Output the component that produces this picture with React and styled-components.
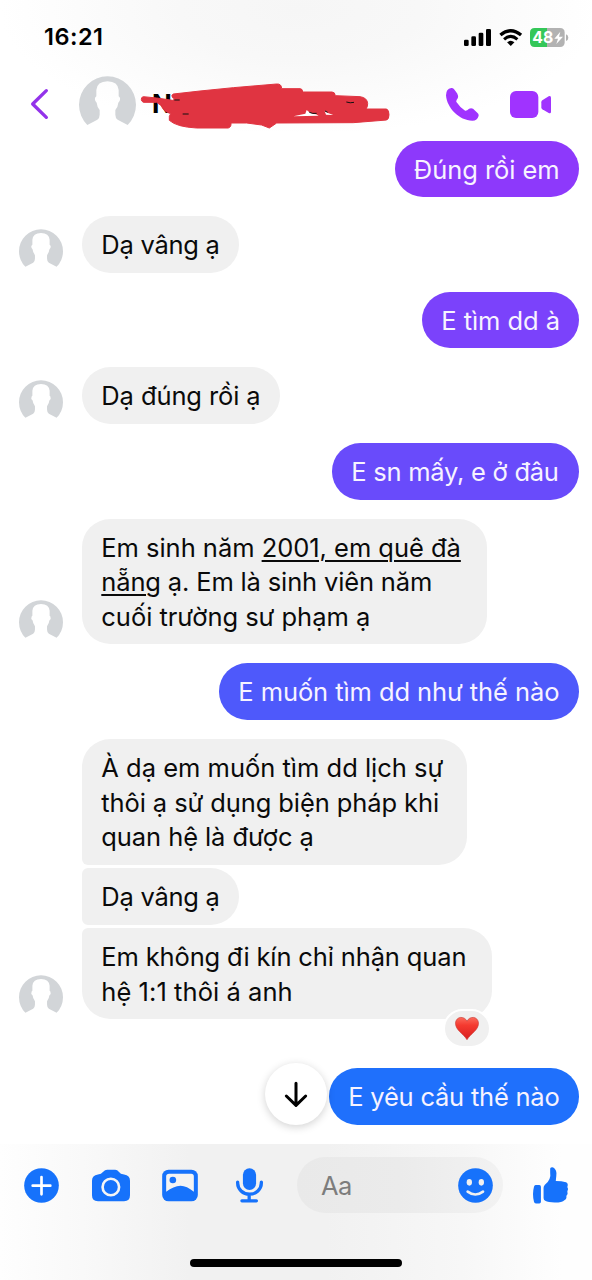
import React from "react";
import styled, { createGlobalStyle } from "styled-components";

const GlobalStyle = createGlobalStyle`
  * { box-sizing: border-box; }
  body {
    margin: 0;
    background: #fff;
    font-family: Inter, "Liberation Sans", sans-serif;
  }
  svg { display: block; overflow: visible; }
`;

const Screen = styled.div`
  width: 592px;
  height: 1280px;
  display: flex;
  flex-direction: column;
  overflow: hidden;
  background: #fff;
`;

const Header = styled.header`
  height: 132px;
  flex: none;
  background: radial-gradient(ellipse 300px 125px at 300px 10px, #f6f6f6 0%, #f8f8f8 40%, #fff 100%);
`;

const StatusBar = styled.div`
  height: 74px;
  display: flex;
  align-items: center;
  padding: 0 23px 0 44px;
`;

const Clock = styled.div`
  flex: 1;
  font-size: 23.5px;
  font-weight: 600;
  letter-spacing: 0.5px;
  line-height: 28px;
`;

const StatusIcons = styled.div`
  display: flex;
  align-items: center;
  gap: 8px;
`;

const NavBar = styled.div`
  height: 58px;
  display: flex;
  align-items: center;
  padding: 2px 41px 0 31px;
`;

const HeaderAvatar = styled.div`
  margin-left: 31px;
`;

const Name = styled.div`
  position: relative;
  flex: 1;
  margin-left: 16px;
  font-size: 26px;
  font-weight: 700;
  line-height: 32px;
`;

const Scribble = styled.svg`
  position: absolute;
  left: -11px;
  top: -5px;
`;

const Calls = styled.div`
  display: flex;
  align-items: center;
  gap: 31px;
`;

const Chat = styled.main`
  position: relative;
  height: 1012px;
  flex: none;
  padding: 8.6px 13px 0 19px;
  display: flex;
  flex-direction: column;
  gap: 19px;
`;

const Sent = styled.div`
  align-self: flex-end;
  width: ${(p) => p.$width}px;
  height: 56.6px;
  padding: 12px 19.3px 10px;
  border-radius: 28.3px;
  background: ${(p) => p.$color};
  color: #f7f3ff;
  font-size: 25.5px;
  line-height: 34.6px;
  white-space: nowrap;
  margin-top: ${(p) => p.$top || 0}px;
`;

const Received = styled.div`
  display: flex;
  align-items: flex-end;
  gap: 19px;
`;

const SmallAvatar = styled.div`
  width: 44px;
  height: 44px;
`;

const Stack = styled.div`
  display: flex;
  flex-direction: column;
  gap: 3.4px;
`;

const Bubble = styled.div`
  position: relative;
  width: ${(p) => p.$width}px;
  padding: 12px 19.3px 10px;
  border-radius: ${(p) => p.$radius || "28.3px"};
  background: #f0f0f0;
  color: #0a0a0a;
  font-size: 25.5px;
  line-height: 34.6px;
  white-space: nowrap;
`;

const Line = styled.span`
  display: table;
  height: 34.6px;
  letter-spacing: ${(p) => p.$track || 0}px;
`;

const Underlined = styled.span`
  text-decoration: underline;
  text-decoration-thickness: 1.5px;
  text-underline-offset: 3px;
`;

const Reaction = styled.div`
  position: absolute;
  right: 1px;
  bottom: -29px;
  width: 48px;
  height: 39px;
  border: 2px solid #fff;
  border-radius: 20px;
  background: #f0f0f0;
  display: flex;
  align-items: center;
  justify-content: center;
`;

const ScrollDown = styled.button`
  position: absolute;
  left: 265px;
  top: 931px;
  width: 62px;
  height: 62px;
  padding: 0;
  border: 0;
  border-radius: 50%;
  background: #fff;
  box-shadow: 0 2px 8px rgba(0, 0, 0, 0.18);
  display: flex;
  align-items: center;
  justify-content: center;
`;

const Footer = styled.footer`
  flex: 1;
  display: flex;
  flex-direction: column;
  justify-content: space-between;
  align-items: center;
  padding: 13px 0;
  background: linear-gradient(90deg, #fefefe 0%, #f9f9f9 14%, #f1f1f1 32%, #f1f1f1 55%, #f7f7f7 78%, #fefefe 95%);
`;

const Toolbar = styled.div`
  width: 100%;
  display: grid;
  grid-template-columns: 67.5px 70.5px 74px 61px 206px 1fr;
  align-items: center;
  padding-left: 24px;
`;

const Input = styled.div`
  height: 56px;
  border-radius: 28px;
  padding: 0 10px 0 24px;
  display: flex;
  align-items: center;
  justify-content: space-between;
  background: linear-gradient(90deg, #e9e9e9, #ebebeb 50%, #f2f2f2);
  color: #7d7d7d;
  font-size: 25.5px;
  letter-spacing: -0.5px;
`;

const LikeButton = styled.div`
  margin-left: 30px;
`;

const HomeIndicator = styled.div`
  width: 212px;
  height: 8px;
  border-radius: 4px;
  background: #000;
`;

const BLUE = "#1672fb";
const PURPLE = "#a033ff";

function Avatar({ size }) {
  return (
    <svg width={size} height={size} viewBox="0 0 171 171">
      <path
        fill="#d2d5d8"
        d="M25 147A85.5 85.5 0 1 1 146 147L116 131Q109 126 109 116V102Q117 92 118 80Q126 72 122 64L119 61V42Q117 17 85.500 16Q54 17 52 42V61L49 64Q45 72 53 80Q54 92 62 102V116Q62 126 55 131Z"
      />
    </svg>
  );
}

function StatusGlyphs() {
  return (
    <StatusIcons>
      <svg width="27" height="17" viewBox="0 0 81 51">
        <rect x="0" y="32" width="14" height="19" rx="4" />
        <rect x="22" y="22" width="14" height="29" rx="4" />
        <rect x="44" y="11" width="14" height="40" rx="4" />
        <rect x="66" y="0" width="15" height="51" rx="4" />
      </svg>
      <svg width="23.500" height="17" viewBox="0 0 70 51">
        <path d="M4 18Q35-8 66 18" fill="none" stroke="#000" strokeWidth="10" />
        <path d="M15 31Q35 13 55 31" fill="none" stroke="#000" strokeWidth="9" />
        <path d="M24 40Q35 31 46 40L35 51Z" />
      </svg>
      <svg width="39" height="19" viewBox="0 0 117 57">
        <path d="M14 0H51V57H14Q0 57 0 43V14Q0 0 14 0Z" fill="#34c759" />
        <path d="M51 0H90Q104 0 104 14V43Q104 57 90 57H51Z" fill="#b2b2b2" />
        <path d="M108 19Q115 22 115 29T108 39Z" fill="#b2b2b2" />
        <text x="7" y="46" fontSize="49" fontWeight="700" fill="#fff" textLength="63" lengthAdjust="spacingAndGlyphs">48</text>
        <path d="M91 11L73 32H84L79 48L99 26H87Z" fill="#fff" />
      </svg>
    </StatusIcons>
  );
}

function RedScribble() {
  return (
    <Scribble width="250" height="46" viewBox="423 250 750 138">
      <path
        fill="#e03441"
        stroke="#e03441"
        strokeWidth="3"
        strokeLinejoin="round"
        d="M520 283L600 274L700 264L830 253Q845 252 845 267H900Q908 267 908 277H996Q1005 277 1006 288L1080 291Q1102 294 1103 312Q1103 322 1098 328H1160Q1167 332 1167 345Q1167 358 1160 361L1060 369L830 370L808 385L785 376L740 370H693Q694 384 684 385H590Q530 382 508 362V350L512 342Q490 335 484 318L470 308H430Q424 305 424 299Q424 292 430 291L470 295L518 302Q528 298 518 294Q512 286 520 283Z"
      />
      <path d="M920 331Q932 343 948 344L956 348L880 350L916 342ZM974 334Q984 342 1000 346L978 345Z" fill="#fff" />
      <path d="M928 338Q938 343 950 341M975 334L983 338M1039 307Q1051 311 1062 308M548 343H566M523 301H539" fill="none" stroke="#111" strokeWidth="3" />
    </Scribble>
  );
}

function Heart() {
  return (
    <svg width="24" height="23" viewBox="0 0 72 70">
      <defs>
        <linearGradient id="heart" x1="0" y1="0" x2="0" y2="1">
          <stop offset="0" stopColor="#fb6a5b" />
          <stop offset="0.35" stopColor="#f53a30" />
          <stop offset="1" stopColor="#d81e1e" />
        </linearGradient>
      </defs>
      <path
        d="M36 13C29-4 2-3 1 19C1 40 25 51 36 69C47 51 71 40 71 19C70-3 43-4 36 13Z"
        fill="url(#heart)"
        stroke="#c93a34"
        strokeWidth="2"
      />
    </svg>
  );
}

function App() {
  return (
    <>
      <GlobalStyle />
      <Screen>
        <Header>
          <StatusBar>
            <Clock>16:21</Clock>
            <StatusGlyphs />
          </StatusBar>
          <NavBar>
            <svg width="17" height="30" viewBox="0 0 51 90">
              <path d="M46 5L5 45L46 85" fill="none" stroke="#9333ea" strokeWidth="10" strokeLinecap="round" strokeLinejoin="round" />
            </svg>
            <HeaderAvatar>
              <Avatar size={57} />
            </HeaderAvatar>
            <Name>
              N
              <RedScribble />
            </Name>
            <Calls>
              <svg width="33" height="33" viewBox="450 263 100 100" fill={PURPLE}>
                <path d="M466 263Q450 266 450 285C452 322 490 362 530 362Q545 362 549 347Q550 341 544 337L532 326Q526 322 520 326Q513 333 508 332Q492 322 481 305Q480 300 486 293Q488 287 484 280L474 266Q470 262 466 263Z" />
              </svg>
              <svg width="41" height="27" viewBox="642 272 123 81" fill={PURPLE}>
                <rect x="642" y="272" width="85" height="81" rx="18" />
                <path d="M739 300L758 288Q765 285 765 292V334Q765 341 758 338L739 327Q736 325 736 321V306Q736 302 739 300Z" />
              </svg>
            </Calls>
          </NavBar>
        </Header>

        <Chat>
          <Sent $width={184.5} $color="#8d39fb">
            <Line $track={-0.05}>Đúng rồi em</Line>
          </Sent>
          <Received>
            <SmallAvatar><Avatar size={44} /></SmallAvatar>
            <Bubble $width={156.5}><Line $track={-0.25}>Dạ vâng ạ</Line></Bubble>
          </Received>
          <Sent $width={157} $color="#7b42fb">
            <Line $track={-0.05}>E tìm dd à</Line>
          </Sent>
          <Received>
            <SmallAvatar><Avatar size={44} /></SmallAvatar>
            <Bubble $width={198}><Line $track={-0.1}>Dạ đúng rồi ạ</Line></Bubble>
          </Received>
          <Sent $width={247} $color="#694bfb">
            <Line $track={-0.25}>E sn mấy, e ở đâu</Line>
          </Sent>
          <Received>
            <SmallAvatar><Avatar size={44} /></SmallAvatar>
            <Bubble $width={405}>
              <Line $track={-0.03}>Em sinh năm <Underlined>2001, em quê đà</Underlined></Line>
              <Line $track={-0.15}><Underlined>nẵng</Underlined> ạ. Em là sinh viên năm</Line>
              <Line $track={-0.03}>cuối trường sư phạm ạ</Line>
            </Bubble>
          </Received>
          <Sent $width={360} $color="#4e59fb">
            <Line $track={-0.08}>E muốn tìm dd như thế nào</Line>
          </Sent>
          <Received>
            <SmallAvatar><Avatar size={44} /></SmallAvatar>
            <Stack>
              <Bubble $width={385} $radius="28.3px 28.3px 28.3px 6px">
                <Line>À dạ em muốn tìm dd lịch sự</Line>
                <Line $track={-0.1}>thôi ạ sử dụng biện pháp khi</Line>
                <Line $track={-0.08}>quan hệ là được ạ</Line>
              </Bubble>
              <Bubble $width={156.5} $radius="6px 28.3px 28.3px 6px">
                <Line $track={-0.25}>Dạ vâng ạ</Line>
              </Bubble>
              <Bubble $width={410} $radius="6px 28.3px 28.3px 28.3px">
                <Line $track={-0.14}>Em không đi kín chỉ nhận quan</Line>
                <Line $track={0.06}>hệ 1:1 thôi á anh</Line>
                <Reaction><Heart /></Reaction>
              </Bubble>
            </Stack>
          </Received>
          <Sent $width={250} $color="#1f70fc" $top={30}>
            <Line $track={-0.22}>E yêu cầu thế nào</Line>
          </Sent>
          <ScrollDown>
            <svg width="22" height="25" viewBox="0 0 66 75">
              <path d="M33 4V69M4 42L33 70L62 42" fill="none" stroke="#000" strokeWidth="9" strokeLinecap="round" strokeLinejoin="round" />
            </svg>
          </ScrollDown>
        </Chat>

        <Footer>
          <Toolbar>
            <svg width="35" height="35" viewBox="0 0 105 105">
              <circle cx="52.5" cy="52.5" r="52" fill={BLUE} />
              <path d="M52.500 27V79M26 53H79" stroke="#fff" strokeWidth="8" strokeLinecap="round" />
            </svg>
            <svg width="38" height="35" viewBox="274 113 115 105">
              <path fill={BLUE} d="M292 132Q302 132 308 124Q313 118 320 118H344Q351 118 355 124Q360 132 371 132Q389 134 389 151V195Q389 213 371 213H292Q274 213 274 195V151Q274 134 292 132Z" />
              <circle cx="331" cy="170" r="25" fill="none" stroke="#f5f5f5" strokeWidth="8" />
            </svg>
            <svg width="36" height="35" viewBox="486 113 107 105">
              <rect x="486" y="118" width="107" height="95" rx="19" fill={BLUE} />
              <path d="M507 130H573Q581 130 581 138V184Q560 166 541 166Q520 167 498 184V138Q498 130 507 130Z" fill="#f3f3f3" />
              <circle cx="518" cy="149" r="10" fill={BLUE} />
            </svg>
            <svg width="27" height="35" viewBox="708 113 82 105">
              <rect x="729" y="113" width="40" height="66" rx="20" fill={BLUE} />
              <path d="M713 155V158A36 34 0 0 0 785 158V155M748 192V210M726 212H770" fill="none" stroke={BLUE} strokeWidth="10" strokeLinecap="round" />
            </svg>
            <Input>
              Aa
              <svg width="35" height="35" viewBox="0 0 105 105">
                <circle cx="52.5" cy="52.5" r="52" fill={BLUE} />
                <ellipse cx="34" cy="43" rx="8" ry="10" fill="#f0f0f0" />
                <ellipse cx="70" cy="43" rx="8" ry="10" fill="#f0f0f0" />
                <path d="M29 71Q52 88 75 71" fill="none" stroke="#f0f0f0" strokeWidth="8" strokeLinecap="round" />
              </svg>
            </Input>
            <LikeButton>
              <svg width="35" height="37" viewBox="711 107 106 111" fill={BLUE}>
                <path d="M719 161H730Q735 161 735 166V212Q735 217 730 217H720Q715 217 714 212Q708 188 714 166Q715 161 719 161Z" />
                <path d="M763 111Q764 107 770 107Q781 111 782 125Q782 134 780 149Q798 149 811 153Q819 157 815 167Q820 174 815 181Q818 188 812 194Q814 202 806 207Q800 214 777 214Q757 214 748 209Q743 206 743 200V169Q743 164 747 160Q757 153 761 143Q765 134 763 124Z" />
              </svg>
            </LikeButton>
          </Toolbar>
          <HomeIndicator />
        </Footer>
      </Screen>
    </>
  );
}

export default App;
